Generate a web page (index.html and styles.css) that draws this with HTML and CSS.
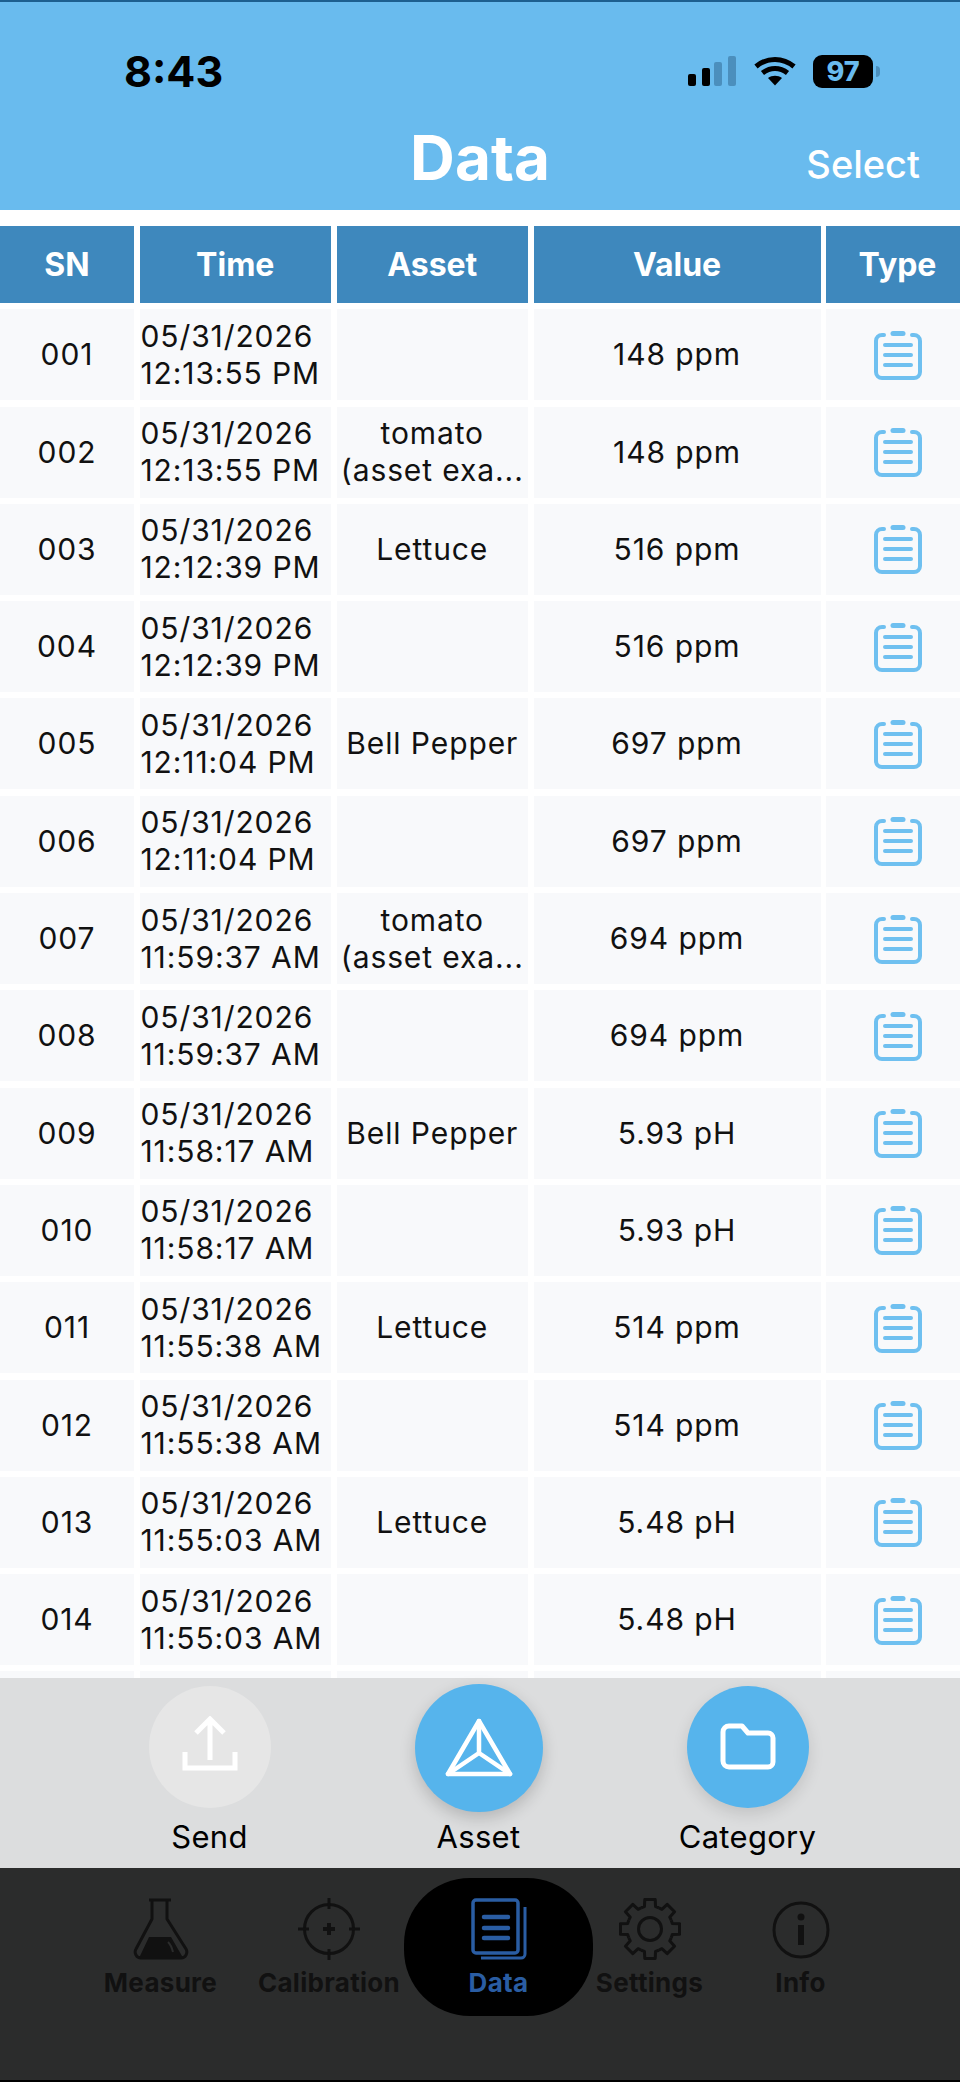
FILE: index.html
```html
<!DOCTYPE html>
<html lang="en">
<head>
    <meta charset="UTF-8">
    <meta name="viewport" content="width=device-width, initial-scale=1.0">
    <title>Data</title>
    <link rel="stylesheet" href="styles.css">
</head>
<body>
    <svg class="sprites" width="0" height="0">
        <symbol id="clipboard" viewBox="0 0 50 50">
            <path d="M11 5H9a6 6 0 0 0-6 6v31a6 6 0 0 0 6 6h32a6 6 0 0 0 6-6V11a6 6 0 0 0-6-6h-2" fill="none" stroke="currentColor" stroke-width="4" stroke-linecap="round"/>
            <path d="M20 3.500h10" fill="none" stroke="currentColor" stroke-width="5" stroke-linecap="round"/>
            <path d="M12 15h26M12 25h26M12 35h26" fill="none" stroke="currentColor" stroke-width="4" stroke-linecap="round"/>
        </symbol>
    </svg>

    <header class="app-header">
        <div class="status-bar">
            <span class="clock">8:43</span>
            <div class="status-icons">
                <svg class="signal" width="48" height="30" viewBox="0 0 48 30">
                    <rect x="0" y="18" width="8" height="12" rx="2" fill="#000"/>
                    <rect x="14" y="12" width="8" height="18" rx="2" fill="#000"/>
                    <rect x="26" y="6" width="8" height="24" rx="2" fill="#4b8fbd"/>
                    <rect x="40" y="0" width="8" height="30" rx="2" fill="#4b8fbd"/>
                </svg>
                <svg class="wifi" width="42" height="30" viewBox="0 0 42 30">
                    <path d="M2 10.500C13 1 29 1 40 10.500M8.500 17C16 11 26 11 33.500 17" fill="none" stroke="#000" stroke-width="5"/>
                    <path d="M14 22C18 19 24 19 28 22L21 29.500Z" fill="#000"/>
                </svg>
                <div class="battery"><span>97</span></div>
                <span class="battery-cap"></span>
            </div>
        </div>
        <div class="title-bar">
            <h1>Data</h1>
            <span class="select-link">Select</span>
        </div>
    </header>

    <main class="table">
        <div class="table-row table-head">
            <div>SN</div><div>Time</div><div>Asset</div><div>Value</div><div class="type">Type</div>
        </div>
        <div class="table-row"><div>001</div><div class="time">05/31/2026<br>12:13:55 PM</div><div></div><div>148 ppm</div><div class="type"><svg><use href="#clipboard"/></svg></div></div>
        <div class="table-row"><div>002</div><div class="time">05/31/2026<br>12:13:55 PM</div><div>tomato<br>(asset exa...</div><div>148 ppm</div><div class="type"><svg><use href="#clipboard"/></svg></div></div>
        <div class="table-row"><div>003</div><div class="time">05/31/2026<br>12:12:39 PM</div><div>Lettuce</div><div>516 ppm</div><div class="type"><svg><use href="#clipboard"/></svg></div></div>
        <div class="table-row"><div>004</div><div class="time">05/31/2026<br>12:12:39 PM</div><div></div><div>516 ppm</div><div class="type"><svg><use href="#clipboard"/></svg></div></div>
        <div class="table-row"><div>005</div><div class="time">05/31/2026<br>12:11:04 PM</div><div>Bell Pepper</div><div>697 ppm</div><div class="type"><svg><use href="#clipboard"/></svg></div></div>
        <div class="table-row"><div>006</div><div class="time">05/31/2026<br>12:11:04 PM</div><div></div><div>697 ppm</div><div class="type"><svg><use href="#clipboard"/></svg></div></div>
        <div class="table-row"><div>007</div><div class="time">05/31/2026<br>11:59:37 AM</div><div>tomato<br>(asset exa...</div><div>694 ppm</div><div class="type"><svg><use href="#clipboard"/></svg></div></div>
        <div class="table-row"><div>008</div><div class="time">05/31/2026<br>11:59:37 AM</div><div></div><div>694 ppm</div><div class="type"><svg><use href="#clipboard"/></svg></div></div>
        <div class="table-row"><div>009</div><div class="time">05/31/2026<br>11:58:17 AM</div><div>Bell Pepper</div><div>5.93 pH</div><div class="type"><svg><use href="#clipboard"/></svg></div></div>
        <div class="table-row"><div>010</div><div class="time">05/31/2026<br>11:58:17 AM</div><div></div><div>5.93 pH</div><div class="type"><svg><use href="#clipboard"/></svg></div></div>
        <div class="table-row"><div>011</div><div class="time">05/31/2026<br>11:55:38 AM</div><div>Lettuce</div><div>514 ppm</div><div class="type"><svg><use href="#clipboard"/></svg></div></div>
        <div class="table-row"><div>012</div><div class="time">05/31/2026<br>11:55:38 AM</div><div></div><div>514 ppm</div><div class="type"><svg><use href="#clipboard"/></svg></div></div>
        <div class="table-row"><div>013</div><div class="time">05/31/2026<br>11:55:03 AM</div><div>Lettuce</div><div>5.48 pH</div><div class="type"><svg><use href="#clipboard"/></svg></div></div>
        <div class="table-row"><div>014</div><div class="time">05/31/2026<br>11:55:03 AM</div><div></div><div>5.48 pH</div><div class="type"><svg><use href="#clipboard"/></svg></div></div>
        <div class="table-row"><div></div><div></div><div></div><div></div><div></div></div>
    </main>

    <section class="actions">
        <div class="action">
            <div class="action-btn disabled">
                <svg width="56" height="62" viewBox="0 0 56 62" fill="none" stroke="#fff" stroke-width="5">
                    <path d="M28 44V4M14 17L28 3L42 17"/>
                    <path d="M3 36V52H53V36"/>
                </svg>
            </div>
            <span>Send</span>
        </div>
        <div class="action">
            <div class="action-btn big">
                <svg width="68" height="60" viewBox="0 0 68 60" fill="none" stroke="#fff" stroke-width="4.500" stroke-linejoin="round" stroke-linecap="round">
                    <path d="M34 3L65 56H3Z"/>
                    <path d="M34 3V35M34 35L3 56M34 35L65 56"/>
                </svg>
            </div>
            <span>Asset</span>
        </div>
        <div class="action">
            <div class="action-btn">
                <svg width="56" height="48" viewBox="0 0 56 48" fill="none" stroke="#fff" stroke-width="5" stroke-linejoin="round">
                    <path d="M3 9a6 6 0 0 1 6-6h13l6 7h20a5 5 0 0 1 5 5v24a5 5 0 0 1-5 5H9a6 6 0 0 1-6-6Z"/>
                </svg>
            </div>
            <span>Category</span>
        </div>
    </section>

    <nav class="tabbar">
        <div class="tab">
            <svg width="56" height="62" viewBox="0 0 56 62" fill="none" stroke="#111" stroke-width="3">
                <path d="M16 2H38M19 2V21L3 51a6 6 0 0 0 5 9H48a6 6 0 0 0 5-9L34 21V2" stroke-linejoin="round"/>
                <path d="M16 39H38L49 58a1 1 0 0 1-1 2H8a1 1 0 0 1-1-2Z" fill="#111" stroke="none"/>
                <path d="M35 44C38 47 39 50 40 54" stroke="#2b2c2c" stroke-width="2"/>
            </svg>
            <span>Measure</span>
        </div>
        <div class="tab">
            <svg width="62" height="62" viewBox="0 0 62 62" fill="none" stroke="#111" stroke-width="3">
                <circle cx="31" cy="31" r="24.500"/>
                <path d="M31 0V11M31 51V62M0 31H11M51 31H62"/>
                <path d="M31 25V37M25 31H37" stroke-width="4"/>
            </svg>
            <span>Calibration</span>
        </div>
        <div class="tab active">
            <svg width="56" height="62" viewBox="0 0 56 62" fill="none" stroke="#2a5da3">
                <rect x="2" y="2" width="45" height="53" rx="3" stroke-width="3.500"/>
                <path d="M13 19H37M13 30H37M13 40H37" stroke-width="4.500" stroke-linecap="round"/>
                <path d="M54 9V56a4 4 0 0 1-4 4H10" stroke-width="3"/>
            </svg>
            <span>Data</span>
        </div>
        <div class="tab">
            <svg width="62" height="62" viewBox="0 0 62 62" fill="none" stroke="#111" stroke-width="3" stroke-linejoin="round">
                <path d="M22.200 9.750L25.440 8.680L25.790 1.460H36.210L36.560 8.680L39.800 9.750"/>
                <path d="M22.200 9.750L25.440 8.680L25.790 1.460H36.210L36.560 8.680L39.800 9.750" transform="rotate(45 31 31)"/>
                <path d="M22.200 9.750L25.440 8.680L25.790 1.460H36.210L36.560 8.680L39.800 9.750" transform="rotate(90 31 31)"/>
                <path d="M22.200 9.750L25.440 8.680L25.790 1.460H36.210L36.560 8.680L39.800 9.750" transform="rotate(135 31 31)"/>
                <path d="M22.200 9.750L25.440 8.680L25.790 1.460H36.210L36.560 8.680L39.800 9.750" transform="rotate(180 31 31)"/>
                <path d="M22.200 9.750L25.440 8.680L25.790 1.460H36.210L36.560 8.680L39.800 9.750" transform="rotate(225 31 31)"/>
                <path d="M22.200 9.750L25.440 8.680L25.790 1.460H36.210L36.560 8.680L39.800 9.750" transform="rotate(270 31 31)"/>
                <path d="M22.200 9.750L25.440 8.680L25.790 1.460H36.210L36.560 8.680L39.800 9.750" transform="rotate(315 31 31)"/>
                <circle cx="31" cy="31" r="11.500"/>
            </svg>
            <span>Settings</span>
        </div>
        <div class="tab">
            <svg width="58" height="62" viewBox="0 0 58 62" fill="none" stroke="#111" stroke-width="3">
                <circle cx="29" cy="32" r="27"/>
                <circle cx="29" cy="19" r="3.500" fill="#111" stroke="none"/>
                <path d="M29 27V47" stroke-width="6"/>
            </svg>
            <span>Info</span>
        </div>
    </nav>
</body>
</html>
```

FILE: styles.css
```css
html, body {
    height: 100%;
    margin: 0;
    overflow: hidden;
}
body {
    height: 2082px;
    display: flex;
    flex-direction: column;
    background: #fff;
    font-family: Inter, "Liberation Sans", sans-serif;
    color: #111;
}
.sprites {
    position: absolute;
}

/* header */
.app-header {
    height: 208px;
    flex: none;
    background: #69bbee;
    border-top: 2px solid #1d5f8f;
}
.status-bar {
    height: 100px;
    box-sizing: border-box;
    display: flex;
    align-items: flex-end;
    justify-content: space-between;
    padding: 0 80px 9px 124px;
}
.clock {
    font-size: 43px;
    font-weight: 700;
    line-height: 44px;
    color: #000;
}
.status-icons {
    height: 44px;
    display: flex;
    align-items: center;
}
.wifi {
    margin: 0 17px 0 18px;
}
.battery {
    width: 60px;
    height: 33px;
    background: #000;
    border-radius: 9px;
    display: flex;
    align-items: center;
    justify-content: center;
}
.battery span {
    font-size: 27px;
    font-weight: 800;
    color: #69bbee;
}
.battery-cap {
    width: 4px;
    height: 11px;
    margin-left: 3px;
    background: #4b8fbd;
    border-radius: 0 4px 4px 0;
}
.title-bar {
    position: relative;
    height: 108px;
    display: flex;
    justify-content: center;
}
.title-bar h1 {
    margin: 0;
    padding-top: 20px;
    font-size: 62px;
    font-weight: 700;
    line-height: 72px;
    color: #fff;
}
.select-link {
    position: absolute;
    right: 40px;
    top: 40px;
    font-size: 38px;
    font-weight: 500;
    line-height: 44px;
    color: #fff;
}

/* table */
.table {
    flex: 1;
    min-height: 0;
    overflow: hidden;
    padding-top: 16px;
    display: flex;
    flex-direction: column;
    gap: 6.300px;
}
.table-row {
    flex: none;
    height: 91px;
    display: grid;
    grid-template-columns: 134px 191.500px 191.500px 287px 134px;
    column-gap: 5.500px;
    font-size: 30px;
    line-height: 37px;
    letter-spacing: 0.9px;
}
.table-row > div {
    display: flex;
    align-items: center;
    justify-content: center;
    text-align: center;
    background: #f8f9fb;
}
.table-row > .time {
    justify-content: flex-start;
    text-align: left;
    padding-left: 1px;
}
.table-row > .type {
    padding-left: 9px;
}
.table-head {
    height: 77px;
    font-size: 32px;
    font-weight: 700;
    letter-spacing: 0;
}
.table-row.table-head > div {
    background: #3e88bd;
    color: #fff;
}
.type svg {
    width: 50px;
    height: 50px;
    color: #6fc0f0;
}

/* action bar */
.actions {
    flex: none;
    height: 190px;
    box-sizing: border-box;
    padding: 6px 3px 0 0;
    display: flex;
    justify-content: center;
    background: #dcddde;
}
.action {
    width: 269px;
    display: flex;
    flex-direction: column;
    align-items: center;
    font-size: 31px;
    line-height: 36px;
    letter-spacing: 0.3px;
    color: #000;
}
.action span {
    margin-top: 7px;
}
.action-btn {
    width: 122px;
    height: 122px;
    margin: 2px 0 4px;
    border-radius: 50%;
    display: flex;
    align-items: center;
    justify-content: center;
    background: #56b4ec;
    box-shadow: 0 6px 16px rgba(0, 0, 0, 0.12);
}
.action-btn.big {
    width: 128px;
    height: 128px;
    margin: 0;
    box-shadow: 0 6px 16px rgba(0, 0, 0, 0.18);
}
.action-btn.disabled {
    background: #e6e6e6;
    box-shadow: none;
}

/* tab bar */
.tabbar {
    flex: none;
    height: 214px;
    box-sizing: border-box;
    padding: 10px 0 0 67px;
    display: grid;
    grid-template-columns: 187px 150px 189px 113px 189px;
    align-items: start;
    background: #2b2c2c;
    border-bottom: 2px solid #000;
}
.tab {
    height: 138px;
    box-sizing: border-box;
    padding-top: 19px;
    display: flex;
    flex-direction: column;
    align-items: center;
    font-size: 26px;
    font-weight: 700;
    line-height: 30px;
    letter-spacing: 0.3px;
    white-space: nowrap;
    color: #111;
}
.tab svg {
    height: 64px;
    flex: none;
}
.tab span {
    margin-top: 7px;
}
.tab.active {
    background: #000;
    border-radius: 66px;
    color: #2a5da3;
}
```
